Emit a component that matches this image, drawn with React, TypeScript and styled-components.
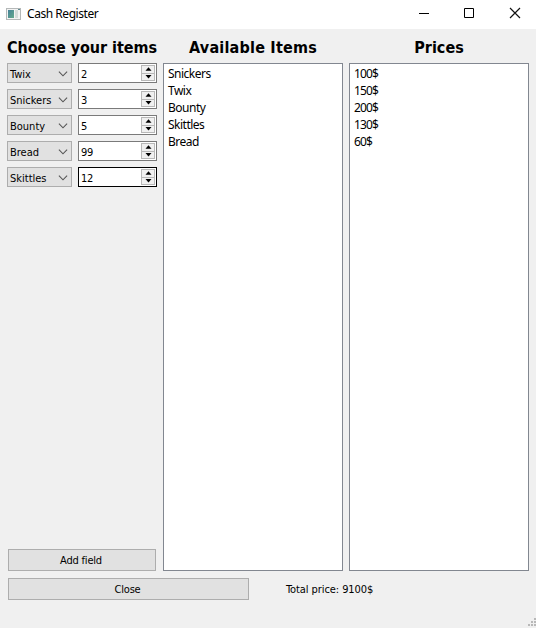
import React, { useState } from 'react';
import styled, { createGlobalStyle } from 'styled-components';

const Global = createGlobalStyle`
  * { box-sizing: border-box; }
  html, body { margin: 0; padding: 0; background: #f0f0f0; overflow: hidden; }
`;

const dialogFont = `'DejaVu Sans Condensed', 'DejaVu Sans', sans-serif`;
const systemFont = `'Noto Sans', 'Open Sans', sans-serif`;

const Window = styled.div`
  width: 536px;
  height: 628px;
  display: flex;
  flex-direction: column;
  background: #f0f0f0;
  color: #000;
  font: 11px ${dialogFont};
  white-space: nowrap;
  position: relative;
`;

const TitleBar = styled.header`
  height: 29px;
  flex: none;
  display: flex;
  align-items: center;
  background: #fff;
  padding-left: 6px;
`;

const Title = styled.span`
  font: 12px/16px ${systemFont};
  letter-spacing: -0.45px;
  margin: 0 auto 1px 5px;
`;

const Controls = styled.div`
  display: flex;
  gap: 33px;
  padding: 0 15px 3px 0;
`;

const Columns = styled.main`
  display: grid;
  grid-template-columns: 150px 180px 180px;
  column-gap: 6px;
  height: 542px;
  padding-left: 7px;
`;

const Column = styled.section`
  display: flex;
  flex-direction: column;
`;

const Heading = styled.h2<{ $spacing: number }>`
  margin: 0;
  height: 34px;
  padding-top: 8px;
  text-align: center;
  font: bold 16px/22px ${dialogFont};
  letter-spacing: ${p => p.$spacing}px;
`;

const ListBox = styled.ul`
  list-style: none;
  margin: 0;
  height: 508px;
  padding: 1px 4px;
  background: #fff;
  border: 1px solid #828790;
`;

const ListItem = styled.li<{ $spacing: number }>`
  height: 17px;
  font: 12px/17px ${systemFont};
  letter-spacing: ${p => p.$spacing}px;
`;

const Fields = styled.div`
  display: flex;
  flex-direction: column;
  gap: 6px;
  flex: 1;
`;

const FieldRow = styled.div`
  display: flex;
  gap: 6px;
  height: 20px;
`;

const Combo = styled.div`
  width: 65px;
  display: flex;
  align-items: center;
  justify-content: space-between;
  padding: 2px 3px 0 2px;
  background: #e1e1e1;
  border: 1px solid #adadad;
  letter-spacing: 0;
`;

const SpinBox = styled.div<{ $focused: boolean }>`
  width: 79px;
  display: flex;
  justify-content: space-between;
  padding: 1px 1px 1px 2px;
  background: #fff;
  border: 1px solid ${p => (p.$focused ? '#000' : '#7a7a7a')};
`;

const SpinValue = styled.span`
  line-height: 18px;
  letter-spacing: -0.3px;
  padding-top: 1px;
`;

const Steppers = styled.div`
  display: flex;
  flex-direction: column;
  width: 14px;
`;

const Stepper = styled.button`
  flex: 1;
  display: flex;
  align-items: center;
  justify-content: center;
  padding: 0;
  background: #f0f0f0;
  border: 1px solid #b8b8b8;
  & + & { border-top: 0; }
`;

const PushButton = styled.button<{ $width: number }>`
  width: ${p => p.$width}px;
  height: 22px;
  padding: 1px 2px 0 0;
  color: #000;
  background: #e1e1e1;
  border: 1px solid #adadad;
  font: 11px ${dialogFont};
  letter-spacing: -0.2px;
`;

const AddSlot = styled.div`
  padding: 0 1px;
`;

const Footer = styled.footer`
  display: flex;
  align-items: center;
  padding: 7px 0 0 8px;
`;

const Total = styled.span`
  margin: 0 0 0 37px;
  letter-spacing: -0.08px;
`;

const Grip = styled.svg`
  position: absolute;
  right: 0;
  bottom: 0;
`;

const AppIcon = () => (
  <svg width="16" height="14" viewBox="0 0 16 14">
    <defs>
      <linearGradient id="pane" x1="0" y1="0" x2="1" y2="1">
        <stop offset="0" stopColor="#448198" />
        <stop offset="1" stopColor="#65aa8c" />
      </linearGradient>
    </defs>
    <rect x=".5" y=".5" width="14" height="11" fill="#f3f3f3" stroke="#b4b8b8" />
    <rect x="2" y="2" width="6" height="8" fill="url(#pane)" />
    <rect x="9" y="2" width="3" height="8" fill="#d5dcda" />
    <path d="M12 1.5h2" stroke="#638a91" />
  </svg>
);

const Chevron = () => (
  <svg width="10" height="6" viewBox="0 0 10 6">
    <path d="M.9.7 5 4.8 9.1.7" fill="none" stroke="#555" strokeWidth="1.1" />
  </svg>
);

const Arrow = ({ down = false }: { down?: boolean }) => (
  <svg width="7" height="4" viewBox="0 0 7 4">
    <path d={down ? 'M.5 0h6l-3 3.4z' : 'M.5 3.7h6l-3-3.4z'} fill="#000" />
  </svg>
);

const products = [
  ['Snickers', '100$'],
  ['Twix', '150$'],
  ['Bounty', '200$'],
  ['Skittles', '130$'],
  ['Bread', '60$'],
];

const gripDots = [[9, 1], [6, 4], [9, 4], [3, 7], [6, 7], [9, 7]];

export default function App() {
  const [fields, setFields] = useState([
    { name: 'Twix', count: 2 },
    { name: 'Snickers', count: 3 },
    { name: 'Bounty', count: 5 },
    { name: 'Bread', count: 99 },
    { name: 'Skittles', count: 12 },
  ]);
  const step = (index: number, by: number) =>
    setFields(fields.map((f, i) => (i === index ? { ...f, count: Math.max(0, f.count + by) } : f)));
  const total = fields.reduce((sum, f) => {
    const price = products.find(([name]) => name === f.name)?.[1] ?? '0';
    return sum + f.count * parseInt(price, 10);
  }, 0);

  return (
    <Window>
      <Global />
      <TitleBar>
        <AppIcon />
        <Title>Cash Register</Title>
        <Controls>
          <svg width="13" height="12"><path d="M1 6.5h10" stroke="#000" /></svg>
          <svg width="12" height="12"><path d="M.5 1.5h9v9h-9z" fill="none" stroke="#000" /></svg>
          <svg width="12" height="12"><path d="m1 1 10 10M11 1 1 11" stroke="#111" strokeWidth="1.2" /></svg>
        </Controls>
      </TitleBar>
      <Columns>
        <Column>
          <Heading $spacing={-0.05}>Choose your items</Heading>
          <Fields>
            {fields.map((f, i) => (
              <FieldRow key={i}>
                <Combo>{f.name}<Chevron /></Combo>
                <SpinBox $focused={i === 4}>
                  <SpinValue>{f.count}</SpinValue>
                  <Steppers>
                    <Stepper aria-label="Increase" onClick={() => step(i, 1)}><Arrow /></Stepper>
                    <Stepper aria-label="Decrease" onClick={() => step(i, -1)}><Arrow down /></Stepper>
                  </Steppers>
                </SpinBox>
              </FieldRow>
            ))}
          </Fields>
          <AddSlot>
            <PushButton $width={148} onClick={() => setFields([...fields, { name: 'Twix', count: 0 }])}>
              Add field
            </PushButton>
          </AddSlot>
        </Column>
        <Column>
          <Heading $spacing={0.2}>Available Items</Heading>
          <ListBox>
            {products.map(([name]) => <ListItem key={name} $spacing={-0.5}>{name}</ListItem>)}
          </ListBox>
        </Column>
        <Column>
          <Heading $spacing={0}>Prices</Heading>
          <ListBox>
            {products.map(([name, price]) => <ListItem key={name} $spacing={-0.85}>{price}</ListItem>)}
          </ListBox>
        </Column>
      </Columns>
      <Footer>
        <PushButton $width={241}>Close</PushButton>
        <Total>Total price: {total}$</Total>
      </Footer>
      <Grip width="11" height="11">
        {gripDots.map(([x, y]) => <rect key={`${x}-${y}`} x={x} y={y} width="2" height="2" fill="#b8b8b8" />)}
      </Grip>
    </Window>
  );
}
